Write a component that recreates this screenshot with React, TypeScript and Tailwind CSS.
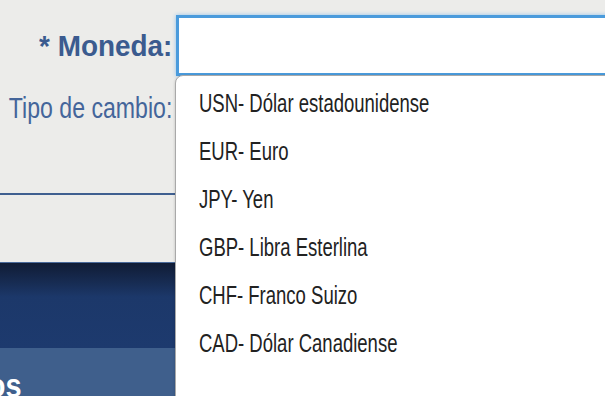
export default function App() {
  const monedas = [
    "USN- Dólar estadounidense",
    "EUR- Euro",
    "JPY- Yen",
    "GBP- Libra Esterlina",
    "CHF- Franco Suizo",
    "CAD- Dólar Canadiense",
  ]

  return (
    <div className="relative h-[396px] w-[605px] overflow-hidden bg-[#ececea] font-['Liberation_Sans',sans-serif]">
      {/* Form */}
      <div className="flex flex-col pt-[15px]">
        <div className="flex h-[61px] items-center">
          <label className="flex w-[176px] shrink-0 justify-end pr-[4px]">
            <span className="inline-block shrink-0 origin-right scale-x-[0.93] whitespace-nowrap text-[30px] font-bold text-[#3b5b8f]">
              * Moneda:
            </span>
          </label>
          <div className="h-[61px] w-[480px] shrink-0 border-[3px] border-[#4a9bdc] bg-white shadow-[0_0_4px_#8ec2ec]" />
        </div>
        <div className="flex h-[63px] items-center">
          <label className="flex w-[176px] shrink-0 justify-end pr-[4px]">
            <span className="inline-block shrink-0 origin-right scale-x-[0.77] whitespace-nowrap text-[30px] text-[#44659a]">
              Tipo de cambio:
            </span>
          </label>
        </div>
      </div>

      <div className="mt-[54px] h-[2px] bg-[#3f5f90]" />
      <div className="h-[67px]" />

      {/* Menu bar */}
      <div className="h-[1px] bg-[#4a6a9a]" />
      <div className="h-[85px] bg-gradient-to-b from-[#101c35] via-[#1c386a] via-40% to-[#1d3a6e]" />
      <div className="h-[49px] overflow-hidden bg-[#3f5f8c] pt-[20px]">
        <div className="flex w-[21px] justify-end">
          <span className="inline-block shrink-0 origin-right scale-x-[0.85] whitespace-nowrap text-[34px] font-bold leading-none text-white">
            Datos
          </span>
        </div>
      </div>

      {/* Dropdown */}
      <div className="absolute left-[175px] top-[75px] h-[340px] w-[480px] rounded-tl-[8px] border border-[#a9a9a9] bg-white pt-[4px] shadow-[0_1px_3px_rgba(0,0,0,0.2)]">
        {monedas.map((m) => (
          <div key={m} className="flex h-[48px] items-center pl-[23px]">
            <span className="inline-block origin-left scale-x-[0.74] whitespace-nowrap text-[25px] text-[#222]">{m}</span>
          </div>
        ))}
      </div>
    </div>
  )
}
